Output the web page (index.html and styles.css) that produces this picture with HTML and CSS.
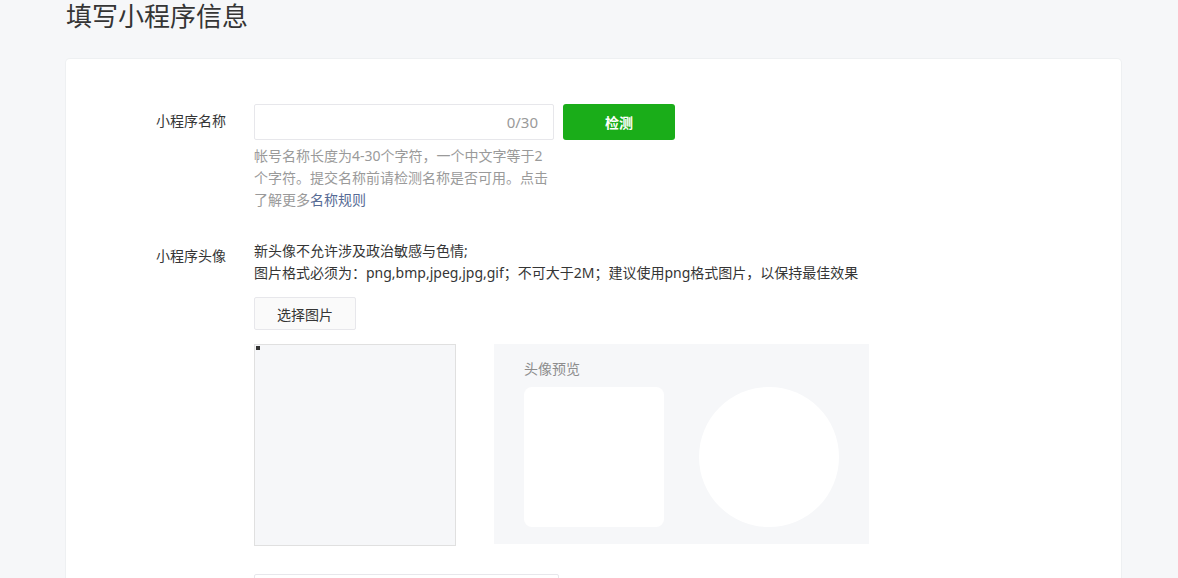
FILE: index.html
```html
<!DOCTYPE html>
<html lang="zh-CN">
<head>
<meta charset="utf-8">
<title>填写小程序信息</title>
<link rel="stylesheet" href="styles.css">
</head>
<body>
<div class="page">
  <h1 class="title">填写小程序信息</h1>
  <div class="card">
    <div class="row row-name">
      <div class="label label-name">小程序名称</div>
      <div class="field">
        <div class="name-line">
          <div class="input">
            <span class="counter">0/30</span>
          </div>
          <button class="btn-primary">检测</button>
        </div>
        <p class="hint">帐号名称长度为4-30个字符，一个中文字等于2个字符。提交名称前请检测名称是否可用。点击了解更多<a class="link">名称规则</a></p>
      </div>
    </div>
    <div class="row row-avatar">
      <div class="label label-avatar">小程序头像</div>
      <div class="field">
        <p class="desc">新头像不允许涉及政治敏感与色情;<br>图片格式必须为：png,bmp,jpeg,jpg,gif；不可大于2M；建议使用png格式图片，以保持最佳效果</p>
        <button class="btn-default">选择图片</button>
        <div class="avatar-area">
          <div class="crop-box"><span class="handle"></span></div>
          <div class="preview">
            <div class="preview-title">头像预览</div>
            <div class="preview-shapes">
              <div class="shape-square"></div>
              <div class="shape-circle"></div>
            </div>
          </div>
        </div>
      </div>
    </div>
    <div class="row row-next">
      <div class="label"></div>
      <div class="field">
        <div class="input input-wide"></div>
      </div>
    </div>
  </div>
</div>
</body>
</html>
```

FILE: styles.css
```css
* { box-sizing: border-box; }
html, body {
  margin: 0;
  padding: 0;
  background: #f6f7f9;
  font-family: "Noto Sans", "Noto Sans CJK SC", sans-serif;
  color: #353535;
  font-size: 14px;
  overflow: hidden;
}
.page {
  margin-left: 66px;
  width: 1055px;
}
.title {
  margin: 0;
  font-size: 26px;
  font-weight: 400;
  line-height: 30px;
  height: 30px;
  color: #353535;
  font-family: "Noto Sans CJK SC", sans-serif;
}
.card {
  margin-top: 29px;
  background: #fff;
  border-radius: 4px;
  box-shadow: 0 0 0 1px #eef0f2;
  padding: 45px 0 40px 90px;
  min-height: 600px;
}
.row {
  display: grid;
  grid-template-columns: 98px 1fr;
}
.label {
  font-family: "Noto Sans CJK SC", sans-serif;
  font-size: 14px;
  color: #353535;
}
.label-name { line-height: 32px; }
.label-avatar { line-height: 30px; }
.name-line {
  display: flex;
  gap: 9px;
}
.input {
  width: 300px;
  height: 36px;
  border: 1px solid #e7e7eb;
  border-radius: 2px;
  background: #fff;
  display: flex;
  align-items: center;
  justify-content: flex-end;
  padding-right: 15px;
}
.counter {
  color: #9a9a9a;
  font-size: 15px;
}
.btn-primary {
  width: 112px;
  height: 36px;
  border: 0;
  border-radius: 3px;
  background: #1aad19;
  color: #fff;
  font-family: "Noto Sans CJK SC", sans-serif;
  font-size: 14px;
  font-weight: 700;
  padding: 0;
}
.hint {
  margin: 5px 0 0;
  width: 300px;
  line-height: 22px;
  color: #9a9a9a;
  font-size: 14px;
}
.link { color: #576b95; text-decoration: none; }
.row-avatar { margin-top: 29px; }
.desc {
  margin: 0;
  line-height: 22px;
  font-size: 14px;
  color: #353535;
}
.btn-default {
  display: block;
  margin-top: 13px;
  width: 102px;
  height: 33px;
  border: 1px solid #e7e7eb;
  border-radius: 2px;
  background: #fafafa;
  color: #353535;
  font-family: "Noto Sans CJK SC", sans-serif;
  font-size: 14px;
  padding: 0;
}
.avatar-area {
  margin-top: 14px;
  display: flex;
  gap: 38px;
  align-items: flex-start;
}
.crop-box {
  position: relative;
  width: 202px;
  height: 202px;
  background: #f6f7f9;
  border: 1px solid #e0e0e0;
}
.handle {
  position: absolute;
  left: 1px;
  top: 1px;
  width: 4px;
  height: 4px;
  background: #333;
}
.preview {
  width: 375px;
  height: 200px;
  background: #f6f7f9;
  padding: 14px 30px 0;
}
.preview-title {
  line-height: 20px;
  color: #8d8d8d;
  font-family: "Noto Sans CJK SC", sans-serif;
  font-size: 14px;
}
.preview-shapes {
  margin-top: 9px;
  display: flex;
  gap: 35px;
}
.shape-square {
  width: 140px;
  height: 140px;
  background: #fff;
  border-radius: 8px;
}
.shape-circle {
  width: 140px;
  height: 140px;
  background: #fff;
  border-radius: 50%;
}
.row-next { margin-top: 28px; }
.input-wide { width: 305px; }
```
